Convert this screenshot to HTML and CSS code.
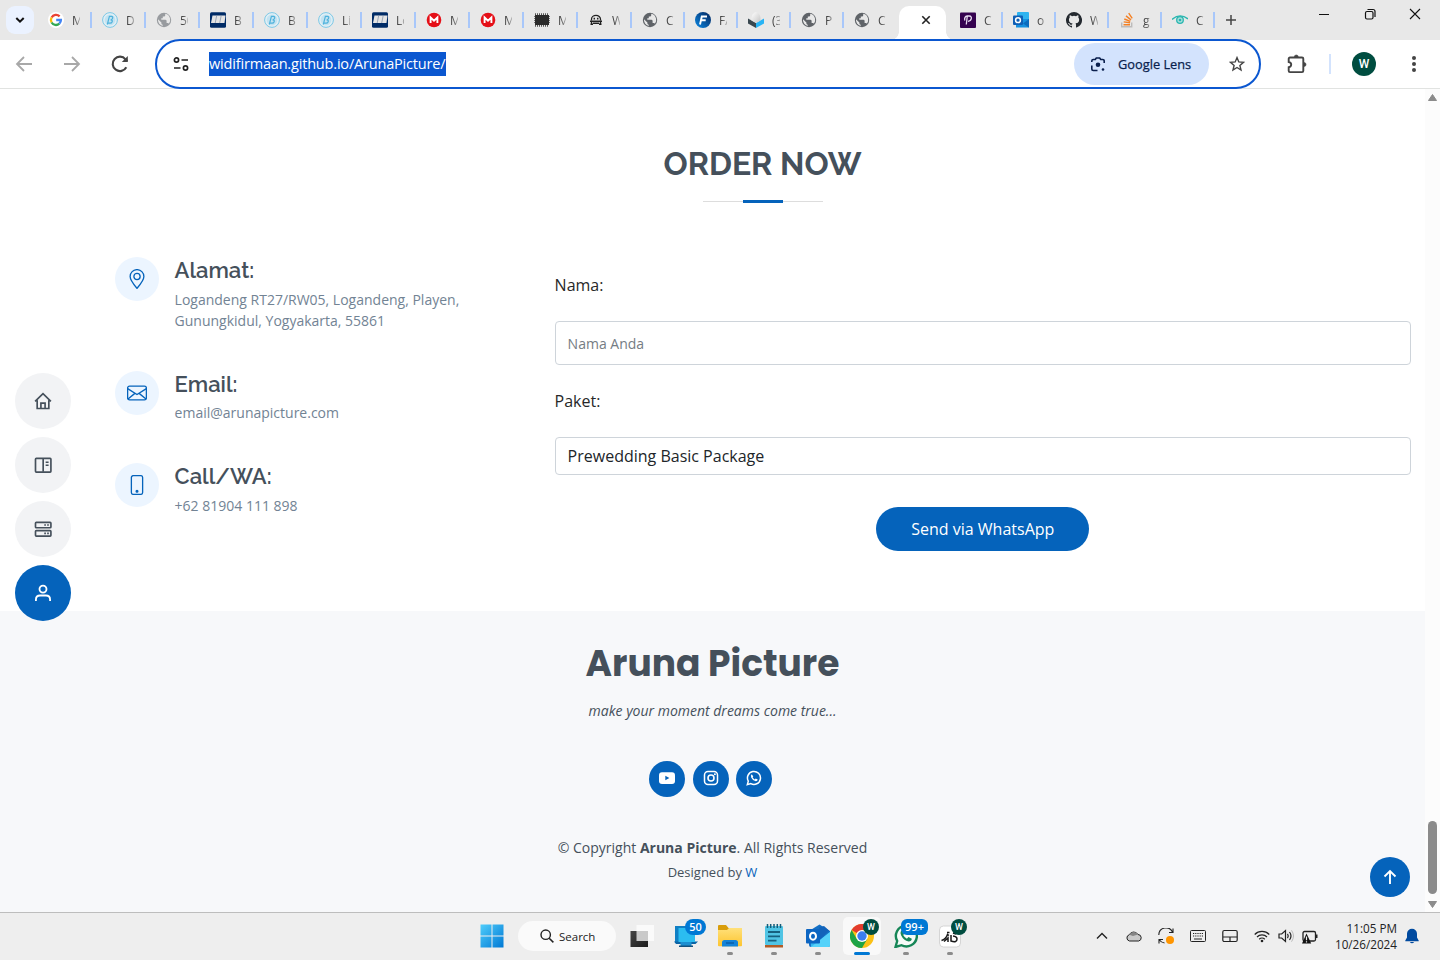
FILE: index.html
```html
<!DOCTYPE html>
<html lang="id">
<head>
<meta charset="utf-8">
<title>Aruna Picture</title>
<link rel="stylesheet" href="styles.css">
</head>
<body>
<svg class="defs" width="0" height="0">
  <defs>
    <linearGradient id="win" x1="0" y1="0" x2="1" y2="1"><stop offset="0" stop-color="#4fcdfb"/><stop offset="1" stop-color="#0078d4"/></linearGradient>
    <linearGradient id="dark" x1="0" y1="0" x2="1" y2="1"><stop offset="0" stop-color="#444"/><stop offset="1" stop-color="#1c1c1c"/></linearGradient>
    <linearGradient id="fold" x1="0" y1="0" x2="0" y2="1"><stop offset="0" stop-color="#ffe07a"/><stop offset="1" stop-color="#fdc52f"/></linearGradient>
    <linearGradient id="fblue" x1="0" y1="1" x2="1" y2="0"><stop offset="0" stop-color="#0b8ae6"/><stop offset="1" stop-color="#04235a"/></linearGradient>
    <linearGradient id="egg" x1="0" y1="0" x2="1" y2="1"><stop offset="0" stop-color="#fff"/><stop offset="1" stop-color="#c4c4c4"/></linearGradient>
  </defs>
  <symbol id="globe" viewBox="0 0 16 16"><circle cx="8" cy="8" r="7.2" fill="currentColor"/><path d="M9.200 1.800v1.700q0 1-1.200 1H6.800v1.700H5.300v1.600h4q1.300 0 1.300 1.300v1.800h1.500l.9.900A6 6 0 0 0 14 6.500 6 6 0 0 0 9.200 1.800zM2 7.300l3.400 3.200v1q0 1 1.300 1.200V14A6 6 0 0 1 2 7.300z" fill="#e8e8e8"/></symbol>
  <symbol id="beta" viewBox="0 0 16 16"><circle cx="8" cy="8" r="7.4" fill="#e2eff5" stroke="#7cc8e6"/><circle cx="8" cy="8" r="5.4" fill="#c3e3f1"/><path d="M5.300 12.500 7.400 4.300h2q1.800.3 1.200 1.900T8.600 7.800q2.200.2 1.600 1.900T7.600 11.200H6" fill="none" stroke="#4fb2dc" stroke-width="1.200"/></symbol>
  <symbol id="board" viewBox="0 0 16 16"><rect y=".3" width="16" height="15.500" rx="1.500" fill="#002b66"/><path d="M2.500 3.500h13l-1 7.500H1z" fill="#e4e4e4"/><path d="M6.700 3.500 5.200 11M11.200 3.500 9.700 11" stroke="#7d8da3" stroke-width=".7"/></symbol>
  <symbol id="mega" viewBox="0 0 16 16"><circle cx="8" cy="8" r="7.300" fill="#e50f17"/><path d="M4.600 11V5.500L8 8.700l3.400-3.200V11" fill="none" stroke="#fff" stroke-width="1.900"/></symbol>
</svg>

<header class="tabstrip">
  <div class="tabsearch"><svg width="10" height="8" viewBox="0 0 10 8"><path d="m1.300 2 3.700 3.700L8.700 2" fill="none" stroke="#111" stroke-width="2"/></svg></div>
  <div class="tab"><svg viewBox="0 0 16 16"><circle cx="8" cy="8" r="8" fill="#fff"/><g fill="none" stroke-width="2.300"><path d="M3.600 5.500A5 5 0 0 1 11.600 4.400" stroke="#ea4335"/><path d="M3.600 5.500a5 5 0 0 0 0 5" stroke="#fbbc05"/><path d="M3.600 10.500a5 5 0 0 0 7.700 1.200" stroke="#34a853"/><path d="M11.300 11.700A5 5 0 0 0 12.900 8H8.200" stroke="#4285f4"/></g></svg><span>M</span></div>
  <div class="tab"><svg><use href="#beta"/></svg><span>D</span></div>
  <div class="tab"><svg class="pale"><use href="#globe"/></svg><span>50</span></div>
  <div class="tab"><svg><use href="#board"/></svg><span>B</span></div>
  <div class="tab"><svg><use href="#beta"/></svg><span>B</span></div>
  <div class="tab"><svg><use href="#beta"/></svg><span>Li</span></div>
  <div class="tab"><svg><use href="#board"/></svg><span>Lo</span></div>
  <div class="tab"><svg><use href="#mega"/></svg><span>M</span></div>
  <div class="tab"><svg><use href="#mega"/></svg><span>M</span></div>
  <div class="tab"><svg viewBox="0 0 16 16"><path d="M1 2.300h14M1 13.700h14" stroke="#555" stroke-width="2" stroke-dasharray="1 1"/><path d="M0 4.500h16M0 6.500h16M0 8.500h16M0 10.500h16" stroke="#777" stroke-width="1"/><rect x="1" y="3" width="14" height="10" fill="#2b2b2b"/></svg><span>M</span></div>
  <div class="tab"><svg viewBox="0 0 16 16"><path d="M3.500 8.500V7.300a4.500 3.900 0 0 1 9 0v1.200" fill="none" stroke="#222" stroke-width="1.300"/><path d="M2 9.300h12M3.500 9v3.200M12.500 9v3.200M2.500 12.200h2.500M11 12.200h2.500M5 11.200h6" stroke="#222" stroke-width="1.400" fill="none"/><path d="M6.300 5.700v1.800M9.700 5.700v1.800" stroke="#222" stroke-width="1.500"/></svg><span>W</span></div>
  <div class="tab t53"><svg class="deep"><use href="#globe"/></svg><span>C</span></div>
  <div class="tab t53"><svg viewBox="0 0 16 16"><circle cx="8" cy="8" r="8" fill="url(#fblue)"/><path d="M5 12.500 6.800 4.500H12M6 8.300h4.700" fill="none" stroke="#fff" stroke-width="1.900"/></svg><span>FA</span></div>
  <div class="tab t53"><svg viewBox="0 0 16 16"><path d="M0 6.500 8 11v5L0 11.500z" fill="#39474f"/><path d="m16 6.500-8 4.500v5l8-4.500z" fill="#28b4f5"/><path d="M8 0q-4 1.300-4.500 6v2.500L8 11l4.500-2.500V6Q12 1.300 8 0z" fill="url(#egg)"/></svg><span>(3</span></div>
  <div class="tab t53"><svg class="deep"><use href="#globe"/></svg><span>P</span></div>
  <div class="tab t53 last"><svg class="deep"><use href="#globe"/></svg><span>C</span></div>
  <div class="tab-active"><svg width="10" height="10" viewBox="0 0 10 10"><path d="m1.300 1.300 7.400 7.400m0-7.400L1.300 8.700" stroke="#222" stroke-width="1.600"/></svg></div>
  <div class="tab t53"><svg viewBox="0 0 16 16"><rect y=".5" width="16" height="15.500" rx="1" fill="#35024f"/><path d="M6.300 12.500 7.300 4M4.800 8.500Q4 4.500 7.300 4h2q2.500.3 2 2.700T8 9.300" fill="none" stroke="#e8dcf0" stroke-width="1.300"/></svg><span>C</span></div>
  <div class="tab t53"><svg viewBox="0 0 16 16"><rect x="4" y="0" width="12" height="9" rx="1" fill="#2eb4f0"/><path d="M3 7h13v8.500H3z" fill="#1590df"/><path d="m16 7-6 4.500 6 4z" fill="#0a6bbd"/><rect y="3.500" width="10" height="9.500" rx="1" fill="#0f5fb5"/><circle cx="5" cy="8.200" r="2.400" fill="none" stroke="#fff" stroke-width="1.500"/></svg><span>o</span></div>
  <div class="tab t53"><svg viewBox="0 0 16 16"><path fill="#24292f" d="M8 0a8 8 0 0 0-2.530 15.590c.4.070.55-.17.55-.38v-1.490c-2.010.37-2.530-.49-2.690-.94-.09-.23-.48-.94-.82-1.130-.28-.15-.68-.52-.01-.53.630-.01 1.080.58 1.230.82.720 1.210 1.870.87 2.330.66.070-.52.280-.87.510-1.070-1.780-.2-3.640-.89-3.640-3.950 0-.87.310-1.590.82-2.150-.08-.2-.36-1.020.08-2.120 0 0 .67-.21 2.200.82a7.500 7.500 0 0 1 4 0c1.530-1.040 2.200-.82 2.200-.82.440 1.100.160 1.920.08 2.120.510.560.82 1.270.82 2.150 0 3.070-1.870 3.750-3.650 3.950.290.250.540.730.540 1.480v2.200c0 .21.150.46.550.38A8 8 0 0 0 8 0"/></svg><span>W</span></div>
  <div class="tab t53"><svg viewBox="0 0 16 16"><path d="M2.700 10.500v4.300h10v-4.300" fill="none" stroke="#bcbbbb" stroke-width="1.400"/><g stroke="#f48024" stroke-width="1.400"><path d="M4.500 12.700h6.500M4.700 9.900l6.400.9M5.300 7l6 2.400M7 3.900l5 4M9.700 1.200l3.500 5.200"/></g></svg><span>g</span></div>
  <div class="tab t53"><svg viewBox="0 0 16 16"><path d="M0 7.500Q8 .5 16 7" fill="none" stroke="#29b6b0" stroke-width="1.400"/><circle cx="8" cy="8" r="3.300" fill="#a6dedb" stroke="#29b6b0" stroke-width="1.300"/><circle cx="8" cy="8" r="1.300" fill="#29b6b0"/></svg><span>C</span></div>
  <svg class="plus" viewBox="0 0 12 12"><path d="M6 1v10M1 6h10" stroke="#444" stroke-width="1.500"/></svg>
  <div class="winctl">
    <svg viewBox="0 0 12 12"><path d="M1 6.500h10" stroke="#111"/></svg>
    <svg viewBox="0 0 12 12"><rect x="1.500" y="3.500" width="7.500" height="7.500" rx="1.500" fill="none" stroke="#111" stroke-width="1.200"/><path d="M3.500 1.500H9a2 2 0 0 1 2 2V9" fill="none" stroke="#111" stroke-width="1.200"/></svg>
    <svg viewBox="0 0 12 12"><path d="m1 1 10 10M11 1 1 11" stroke="#111" stroke-width="1.100"/></svg>
  </div>
</header>

<div class="toolbar">
  <div class="navbtns">
    <svg class="dim" viewBox="0 0 20 20"><path d="M18 10H3m7-7-7 7 7 7" /></svg>
    <svg class="dim" viewBox="0 0 20 20"><path d="M2 10h15m-7-7 7 7-7 7"/></svg>
    <svg viewBox="0 0 20 20"><path d="M16.300 13.200A7.200 7.200 0 1 1 15.500 5.300L17.300 7"/><path d="M17.800 2v6h-6z" fill="#444" stroke="none"/></svg>
  </div>
  <div class="omnibox">
    <svg class="tune" viewBox="0 0 16 16"><g fill="none" stroke="#222" stroke-width="1.700"><circle cx="3.500" cy="4" r="2.100"/><path d="M8.500 4H15M1 12h6.500"/><circle cx="12.500" cy="12" r="2.100"/></g></svg>
    <span class="url">widifirmaan.github.io/ArunaPicture/</span>
    <div class="lens"><svg viewBox="0 0 16 16"><g fill="none" stroke="#0a1f4d" stroke-width="1.600"><path d="M1.800 6V5a1.500 1.500 0 0 1 1.500-1.500h2l1-1.500h3.400l1 1.500h2A1.500 1.500 0 0 1 14.200 5v2M1.800 9.500V13a1.500 1.500 0 0 0 1.500 1.500h4.200"/></g><circle cx="8" cy="8.800" r="2.300" fill="#0a1f4d"/><circle cx="13" cy="13.500" r="1.300" fill="#0a1f4d"/></svg><span>Google Lens</span></div>
    <svg class="star" viewBox="0 0 16 16"><path d="m8 1.600 1.800 4.300 4.700.4-3.600 3.100 1.100 4.600L8 11.500 4 14l1.100-4.600-3.600-3.100 4.700-.4z" fill="none" stroke="#444" stroke-width="1.400"/></svg>
  </div>
  <svg class="puzzle" viewBox="0 0 22 22"><path d="M4.500 4.500h11.500q1.300 0 1.300 1.300v12q0 1.300-1.300 1.300H4q-1.300 0-1.300-1.300v-3.500q2.500-.5 2.500-2.700T2.700 9V5.800q0-1.300 1.300-1.300z" fill="none" stroke="#444" stroke-width="1.900"/><path d="M8.300 4a2 2 0 0 1 4 0M18 9.500a2 2 0 0 1 0 4" fill="#444" stroke="#444" stroke-width=".6"/></svg>
  <i class="tbsep"></i>
  <div class="avatar">W</div>
  <svg class="kebab" viewBox="0 0 4 16"><g fill="#444"><circle cx="2" cy="2" r="2"/><circle cx="2" cy="8" r="2"/><circle cx="2" cy="14" r="2"/></g></svg>
</div>

<div class="viewport">
  <div class="page">
    <nav class="sidenav">
      <a><svg viewBox="0 0 24 24"><path d="m2.500 12.500 9.500-9.300 9.500 9.300M5 11v10h14V11M9.500 21v-6.500h5V21"/></svg></a>
      <a><svg viewBox="0 0 24 24"><rect x="3" y="4" width="18.500" height="16.500" rx="1"/><path d="M12.200 4v16M15.200 8.700h3.500M15.200 12.300h3.500"/></svg></a>
      <a><svg viewBox="0 0 24 24"><rect x="3" y="4" width="18.500" height="6.500" rx="1"/><rect x="3" y="14" width="18.500" height="6.500" rx="1"/><path d="M13.500 7.200h2M17 7.200h2M13.500 17.300h2M17 17.300h2"/></svg></a>
      <a class="active"><svg viewBox="0 0 24 24"><circle cx="12" cy="7.300" r="4.200"/><path d="M3.500 21.500V20q0-5 5-5h7q5 0 5 5v1.500"/></svg></a>
    </nav>
    <main class="contact">
      <h2>ORDER NOW</h2>
      <div class="rule"><i></i></div>
      <div class="cols">
        <div class="info">
          <div class="item"><div class="ico"><svg viewBox="0 0 16 16"><path d="M8 15.500C5.500 12.500 2.500 9 2.500 6a5.500 5.500 0 0 1 11 0c0 3-3 6.500-5.500 9.500z"/><circle cx="8" cy="6" r="2.500"/></svg></div><div><h4>Alamat:</h4><p>Logandeng RT27/RW05, Logandeng, Playen,<br>Gunungkidul, Yogyakarta, 55861</p></div></div>
          <div class="item"><div class="ico"><svg viewBox="0 0 16 16"><rect x=".5" y="2.500" width="15" height="11" rx="1.500"/><path d="m.5 4.500 7.500 4.700 7.500-4.700M.8 12.800l5.500-4.500M15.200 12.800 9.700 8.300"/></svg></div><div><h4>Email:</h4><p>email@arunapicture.com</p></div></div>
          <div class="item phone"><div class="ico"><svg viewBox="0 0 16 16"><rect x="3.500" y=".5" width="9" height="15" rx="1.500"/><circle cx="8" cy="13" r=".7" fill="#0563bb"/></svg></div><div><h4>Call/WA:</h4><p>+62 81904 111 898</p></div></div>
        </div>
        <form class="form">
          <label>Nama:</label>
          <div class="field name">Nama Anda</div>
          <label>Paket:</label>
          <div class="field pack">Prewedding Basic Package</div>
          <div class="send">Send via WhatsApp</div>
        </form>
      </div>
    </main>
    <footer>
      <h3>Aruna Picture</h3>
      <p class="tag">make your moment dreams come true...</p>
      <div class="social">
        <a><svg viewBox="0 0 16 16"><rect y="2.300" width="16" height="11.700" rx="3" fill="#fff"/><path d="M6.300 5.700v4.600L10.400 8z" fill="#0563bb"/></svg></a>
        <a><svg viewBox="0 0 16 16"><rect x="1.500" y="1.500" width="13" height="13" rx="3.500" fill="none" stroke="#fff" stroke-width="1.500"/><circle cx="8" cy="8" r="3" fill="none" stroke="#fff" stroke-width="1.600"/><circle cx="11.900" cy="4.200" r="1" fill="#fff"/></svg></a>
        <a><svg viewBox="0 0 16 16"><path d="m1.300 14.700 1-3.600a6.500 6.500 0 1 1 2.500 2.500z" fill="none" stroke="#fff" stroke-width="1.500"/><path d="M5.800 4.200q-1.500 1 -.6 3.200 1.500 3.200 4.600 3.900 1.800 0 1.900-1.700L9.700 8.500l-.9 1Q7.300 8.800 6.600 7.300l.7-.9z" fill="#fff"/></svg></a>
      </div>
      <p class="copy">© Copyright <b>Aruna Picture</b>. All Rights Reserved</p>
      <p class="by">Designed by <span>W</span></p>
    </footer>
    <a class="totop"><svg viewBox="0 0 16 16"><path d="M8 15V2M2.500 7.500 8 2l5.500 5.500" fill="none" stroke="#fff" stroke-width="1.900"/></svg></a>
  </div>
  <div class="scrollbar">
    <svg viewBox="0 0 9 7"><path d="M4.500.5 8.500 6.500h-8z" fill="#8b8b8b" stroke="#8b8b8b" stroke-linejoin="round"/></svg>
    <i></i>
    <svg viewBox="0 0 9 7"><path d="m4.500 6.500-4-6h8z" fill="#8b8b8b" stroke="#8b8b8b" stroke-linejoin="round"/></svg>
  </div>
</div>

<div class="taskbar">
  <div class="apps">
    <div class="app"><svg viewBox="0 0 24 24"><path d="M.5.500h11v11H.500zM12.500.500h11v11h-11zM.500 12.500h11v11H.500zM12.500 12.500h11v11h-11z" fill="url(#win)"/></svg></div>
    <div class="search"><svg viewBox="0 0 14 14"><circle cx="5.700" cy="5.700" r="4.700" fill="none" stroke="#222" stroke-width="1.400"/><path d="m9.200 9.200 4.200 4.200" stroke="#222" stroke-width="1.500"/></svg><span>Search</span></div>
    <div class="app"><svg viewBox="0 0 24 24"><rect x="6.500" y="1" width="17.500" height="16" fill="#fafafa"/><rect x=".5" y="7" width="17.500" height="16" fill="url(#dark)"/><rect x="6.500" y="7" width="11.500" height="10" fill="#c9c9c9"/></svg></div>
    <div class="app"><svg viewBox="0 0 24 24"><path d="M1 2h15v17H1z" fill="#0f7fc4"/><path d="M0 17.500h24L21.500 20H2z" fill="#0b64a5"/><path d="M4.500 4H21v14H4.500z" fill="#2bbcf0"/><path d="M6.500 18h11v5h-11z" fill="#1b8ed0"/><path d="M5 21.500h14V23H5z" fill="#12517e"/></svg><b class="badge num">50</b></div>
    <div class="app run"><svg viewBox="0 0 24 24"><path d="M0 2q0-1 1-1h7l2.500 3H24v7H0z" fill="#d99d0b"/><path d="M0 6h9l2-2h13v17.500q0 .8-1 .8H1q-1 0-1-.8z" fill="url(#fold)"/><path d="M4 22.500v-4q0-2.500 2.500-2.500h11q2.500 0 2.500 2.500v4z" fill="#1383d8"/><path d="M8 19h8" stroke="#0a5ea8" stroke-width="1.500"/></svg></div>
    <div class="app run"><svg viewBox="0 0 24 24"><rect x="3" y="2" width="18" height="19" rx="1" fill="#50c4e4"/><path d="M3 21h18v2.500H3z" fill="#b25b25"/><path d="M5.500 0v4M8.700 0v4M12 0v4M15.300 0v4M18.500 0v4" stroke="#145c78" stroke-width="1.500"/><path d="M6 8h12M6 12.300h12M6 16.600h8.500" stroke="#17617f" stroke-width="1.800"/></svg></div>
    <div class="app run"><svg viewBox="0 0 24 24"><path d="M3 7 13.500.500 24 7v14q0 2-2 2H5q-2 0-2-2z" fill="#1470c5"/><path d="m4.500 10 9.500 6 10-8v13q0 2-2 2H5z" fill="#35b8f1"/><path d="m24 8-19 15h17q2 0 2-2z" fill="#55d2fa"/><path d="M13 3.500 18 2l5 4.500-9 9z" fill="#1263ba"/><rect y="5" width="14" height="14.500" rx="1" fill="#0c65c2"/><ellipse cx="7" cy="12.200" rx="3" ry="3.500" fill="none" stroke="#fff" stroke-width="2"/></svg></div>
    <div class="app current"><svg viewBox="0 0 24 24"><circle cx="12" cy="12" r="12" fill="#fbc116"/><path d="M12 12 1.600 6A12 12 0 0 1 22.400 6H12z" fill="#e33b2e"/><path d="M1.600 6A12 12 0 0 0 12 24l5.200-9L12 12l-5.200 3z" fill="#1ea446"/><circle cx="12" cy="12" r="6" fill="#fff"/><circle cx="12" cy="12" r="4.700" fill="#3b7df0"/></svg><b class="badge who">W</b></div>
    <div class="app run"><svg viewBox="0 0 24 24"><path d="m1.500 23 1.700-6A10.500 10.500 0 1 1 7.500 21.200z" fill="#f6fbf8" stroke="#168657" stroke-width="2.400"/><path d="M8 6Q5.500 8 7.200 11.500q2.300 4.800 7.400 6 3 0 3.200-2.700l-3.300-1.900-1.600 1.800Q10.400 13.500 9.200 11l1.200-1.600z" fill="#168657"/></svg><b class="badge num wide">99+</b></div>
    <div class="app run"><svg viewBox="0 0 24 24"><rect x="1.500" y="2" width="21" height="21" rx="4" fill="#fff" stroke="#ccc" stroke-width=".8"/><path d="M3.500 16.500q4.500-1.500 6-6l1.500 1M6 17.500l4-3.500v4M13 11v6q6 2 6-2 0-2.500-4-3M9 8.500h2.500M15 9l3 1" fill="none" stroke="#181818" stroke-width="1.500"/></svg><b class="badge who">W</b></div>
  </div>
  <div class="tray">
    <svg viewBox="0 0 16 16"><path d="m3 10.500 5-5 5 5" fill="none" stroke="#222" stroke-width="1.400"/></svg>
    <svg viewBox="0 0 16 16"><path d="M3.500 13a3.200 3.200 0 0 1-.3-6.200A5 5 0 0 1 12 6.500 3.300 3.300 0 0 1 12.700 13z" fill="#c9c9c9" stroke="#222"/><path d="M3.200 6.800A5 5 0 0 1 12 6.500L7 8z" fill="#858585"/></svg>
    <svg viewBox="0 0 16 16"><path d="M.8 7A7.200 7.200 0 0 1 14.500 4M15 .5v4h-4M1 15.500v-4h4M1.500 12a7 7 0 0 0 5 3" fill="none" stroke="#222" stroke-width="1.100"/><circle cx="12" cy="12" r="4" fill="#ff9500"/></svg>
    <svg viewBox="0 0 16 16"><rect x=".5" y="2.500" width="15" height="11" rx="1" fill="none" stroke="#222"/><path d="M3 5.500h10M3 8h10" stroke="#222" stroke-width="1.200" stroke-dasharray="1.200 1"/><path d="M4 11h8" stroke="#222"/></svg>
    <svg viewBox="0 0 16 16"><rect x=".8" y="2.500" width="14.400" height="11" rx="1.500" fill="none" stroke="#222" stroke-width="1.200"/><path d="M1 9h14M8 9v4.500" stroke="#222" stroke-width="1.200"/></svg>
    <svg viewBox="0 0 16 16"><g fill="none" stroke="#222" stroke-width="1.200"><path d="M.7 6.500a10.300 10.300 0 0 1 14.600 0M3 9a7 7 0 0 1 10 0M5.200 11.300a4 4 0 0 1 5.600 0"/></g><circle cx="8" cy="13" r="1.300" fill="#222"/></svg>
    <svg class="vol" viewBox="0 0 16 16"><path d="M1 6v4h2.700L7.500 13.500v-11L3.700 6z" fill="none" stroke="#222" stroke-width="1.200"/><path d="M9.500 5.800q1.500 2.200 0 4.400M11.500 4q3 4 0 8" fill="none" stroke="#222" stroke-width="1.200"/><path d="M13.500 2.300q4 5.700 0 11.400" fill="none" stroke="#bbb"/></svg>
    <svg class="bat" viewBox="0 0 16 16"><rect x="1" y="3.500" width="12.500" height="9.500" rx="1.500" fill="none" stroke="#222" stroke-width="1.300"/><path d="M14.500 6.500v3.500" stroke="#222" stroke-width="2"/><path d="M4.500 5.500 9.200 15.500H0z" fill="#111"/><path d="M4.500 8.500v3.700M4.500 13.200v1.300" stroke="#eee" stroke-width="1.200"/></svg>
    <div class="clock"><span>11:05 PM</span><span>10/26/2024</span></div>
    <svg class="bell" viewBox="0 0 16 16"><path d="M8 .8a5 5 0 0 0-5 5V9.500L1.300 12.500v.7h13.400v-.7L13 9.500V5.800a5 5 0 0 0-5-5zM5.800 14h4.400Q8 16.500 5.800 14z" fill="#004a9f"/></svg>
  </div>
</div>
</body>
</html>
```
FILE: styles.css
```css
* { box-sizing: border-box; }
body { margin: 0; width: 1440px; height: 960px; overflow: hidden; display: flex; flex-direction: column; font-family: "Open Sans", sans-serif; background: #fff; color: #272829; }
h2, h3, h4, p { margin: 0; }
svg { display: block; flex: none; }
.defs { position: absolute; }

/* Tab strip */
.tabstrip { height: 40px; flex: none; background: #e8e8e8; display: flex; align-items: center; }
.tabsearch { width: 28px; height: 28px; margin: 0 4px 0 6px; border-radius: 9px; background: #ebf2ff; display: grid; place-items: center; }
.tab { width: 54px; height: 16px; flex: none; padding-left: 10px; display: flex; align-items: center; gap: 8px; border-right: 2px solid #a8c7fa; }
.t53 { width: 53px; }
.tab.last { border-right-color: transparent; }
.tab svg { width: 16px; height: 16px; }
.tab .pale { color: #989b9f; }
.tab .deep { color: #5f6368; }
.tab span { width: 8px; overflow: hidden; white-space: nowrap; font: 12px/18px "Open Sans", sans-serif; padding-top: 1px; color: #444; -webkit-mask-image: linear-gradient(90deg, #000 30%, rgba(0,0,0,.35)); mask-image: linear-gradient(90deg, #000 30%, rgba(0,0,0,.35)); }
.tab-active { position: relative; width: 47px; height: 34px; flex: none; align-self: flex-end; margin: 0 4px 0 2px; padding: 9px 0 0 22px; border-radius: 10px 10px 0 0; background: #fff; }
.tab-active::before, .tab-active::after { content: ""; position: absolute; bottom: 0; width: 8px; height: 8px; }
.tab-active::before { left: -8px; background: radial-gradient(circle at 0 0, transparent 7.500px, #fff 8px); }
.tab-active::after { right: -8px; background: radial-gradient(circle at 100% 0, transparent 7.500px, #fff 8px); }
.plus { width: 12px; height: 12px; margin-left: 10px; }
.winctl { display: flex; gap: 33.500px; margin: -12px 19px 0 auto; }
.winctl svg { width: 12px; height: 12px; }

/* Toolbar */
.toolbar { height: 49px; flex: none; display: flex; align-items: center; border-bottom: 1px solid #e1e3e1; background: #fff; }
.navbtns { display: flex; gap: 28px; margin-left: 14px; width: 141px; flex: none; }
.navbtns svg { width: 20px; height: 20px; fill: none; stroke: #444; stroke-width: 2.100; }
.navbtns .dim { stroke: #a8a8a8; stroke-width: 1.800; }
.omnibox { position: relative; width: 1106px; height: 50px; flex: none; margin-top: -1px; margin-bottom: -1px; border: 2px solid #0b57d0; border-radius: 25px; background: #fff; display: flex; align-items: center; padding: 0 14px 0 16px; }
.tune { width: 16px; height: 16px; }
.url { margin-left: 20px; height: 24px; width: 237px; white-space: nowrap; background: #0b57d0; color: #fff; font-size: 14.500px; line-height: 23px; letter-spacing: -.18px; }
.lens { margin-left: auto; width: 135px; height: 42px; border-radius: 21px; background: #d3e3fd; display: flex; align-items: center; padding-left: 16px; gap: 12px; color: #0a1f4d; font-size: 12.800px; font-weight: 500; white-space: nowrap; -webkit-text-stroke: .25px #0a1f4d; }
.lens svg, .star { width: 16px; height: 16px; }
.star { margin-left: 20px; }
.puzzle { width: 22px; height: 22px; margin-left: 25px; }
.tbsep { width: 2px; height: 20px; background: #d3e3fd; margin: 0 21px 0 21px; }
.avatar { width: 24px; height: 24px; border-radius: 50%; background: #004d40; color: #fff; font: 500 12px/24px Roboto, sans-serif; text-align: center; }
.kebab { width: 4px; height: 16px; margin-left: 36px; }

/* Page */
.viewport { height: 823px; flex: none; display: flex; }
.page { position: relative; width: 1425px; }
.sidenav { position: absolute; left: 15px; top: 284px; display: flex; flex-direction: column; gap: 8px; }
.sidenav a { width: 56px; height: 56px; border-radius: 50%; background: #f2f3f5; display: grid; place-items: center; }
.sidenav svg { width: 20px; height: 20px; fill: none; stroke: #45505b; stroke-width: 2; }
.sidenav .active { background: #0563bb; }
.sidenav .active svg { stroke: #fff; stroke-width: 2.200; }
.contact { height: 522px; padding: 56px 14px 0 115px; }
.contact h2 { font: 700 32px/38px Raleway, Lato, sans-serif; color: #45505b; text-align: center; margin-left: -1px; }
.rule { width: 120px; height: 3px; margin: 17px auto 0; background: linear-gradient(#ddd, #ddd) 0 1px / 120px 1px no-repeat; }
.rule i { display: block; width: 40px; height: 3px; margin: auto; background: #0563bb; }
.cols { display: flex; margin-top: 54.200px; }
.info { width: 439.600px; flex: none; }
.item { display: flex; gap: 15.600px; }
.item + .item { margin-top: 40px; }
.ico { width: 44px; height: 44px; border-radius: 50%; background: #ecf5ff; display: grid; place-items: center; }
.ico svg { width: 20px; height: 20px; fill: none; stroke: #0563bb; stroke-width: 1.050; }
.item h4 { font: 600 22px/26.400px Raleway, Lato, sans-serif; color: #45505b; margin-bottom: 5px; white-space: nowrap; }
.item.phone h4 { margin-bottom: 6px; }
.item p { font-size: 14px; line-height: 21px; color: #728394; white-space: nowrap; }
.form { flex: 1; padding-top: 16px; display: flex; flex-direction: column; }
.form label { font-size: 16px; line-height: 24px; }
.field { border: 1px solid #ced4da; border-radius: 4px; padding: 0 12px; }
.name { height: 44px; margin: 24px 0; font-size: 14px; line-height: 43px; color: #757c83; }
.pack { height: 38px; margin-top: 24px; font-size: 16px; line-height: 36px; color: #212529; }
.send { align-self: center; width: 213px; height: 44px; margin-top: 32px; border-radius: 22px; background: #0563bb; color: #fff; font-size: 16px; line-height: 44px; text-align: center; }

footer { height: 301px; background: #f7f8fa; color: #45505b; text-align: center; padding-top: 31px; }
footer h3 { font: 700 36px/43px Poppins, Inter, sans-serif; color: #45505b; }
.tag { font-size: 14px; line-height: 21px; font-style: italic; margin-top: 15px; }
.social { display: flex; gap: 7.600px; justify-content: center; margin: 40px 4px 0 0; }
.social a { width: 36px; height: 36px; border-radius: 50%; background: #0563bb; display: grid; place-items: center; }
.social svg { width: 16px; height: 16px; margin-top: -2px; }
.copy { font-size: 14px; line-height: 21px; margin-top: 40px; }
.by { font-size: 13px; line-height: 20px; margin-top: 4px; }
.by span { color: #0563bb; }
.totop { position: absolute; right: 15px; bottom: 15px; width: 40px; height: 40px; border-radius: 50%; background: #0563bb; display: grid; place-items: center; }
.totop svg { width: 16px; height: 16px; }

.scrollbar { width: 15px; background: #fcfcfc; display: flex; flex-direction: column; align-items: center; padding: 5px 0 4px; }
.scrollbar svg { width: 9px; height: 7px; }
.scrollbar i { width: 9px; height: 73px; border-radius: 5px; background: #8b8b8b; margin: auto 0 7px; }

/* Taskbar */
.taskbar { height: 48px; flex: none; background: #eee; border-top: 1px solid #bdbdbd; display: flex; align-items: center; padding-bottom: 1px; }
.apps { display: flex; align-items: center; padding-left: 469.500px; }
.app { position: relative; width: 44px; height: 44px; display: grid; place-items: center; }
.app svg { width: 24px; height: 24px; }
.app.run::after, .app.current::after { content: ""; position: absolute; bottom: 3px; left: 19px; width: 6px; height: 3px; border-radius: 2px; background: #8b8b8b; }
.app.current::before { content: ""; position: absolute; inset: 3px 3px 3px; border-radius: 5px; background: #f9f9f9; }
.app.current svg { position: relative; }
.app.current::after { left: 14px; width: 16px; background: #0078d4; }
.badge { position: absolute; text-align: center; color: #fff; }
.num { top: 5px; left: 21px; width: 21px; height: 16px; border-radius: 8px; background: #0078d4; font: 600 11px/16px "Open Sans", sans-serif; }
.wide { left: 17px; width: 27px; border-radius: 6px; }
.who { top: 5px; left: 23px; width: 16px; height: 16px; border-radius: 50%; background: #004d40; font: 500 9px/16px Roboto, sans-serif; }
.search { width: 98px; height: 30px; margin: 0 4px 0 4.500px; border-radius: 15px; background: #fafafa; display: flex; align-items: center; padding-left: 22px; gap: 5px; font-size: 11.500px; color: #222; }
.search svg { width: 14px; height: 14px; }
.tray { display: flex; align-items: center; margin: 0 20px 0 auto; gap: 16px; }
.tray svg { width: 16px; height: 16px; }
.tray .vol, .tray .bat { margin-left: -8px; }
.clock { width: 63px; display: flex; flex-direction: column; align-items: flex-end; font-size: 11.700px; line-height: 16px; margin-top: -1px; color: #222; }
.tray .bell { margin-left: -9px; }
```
